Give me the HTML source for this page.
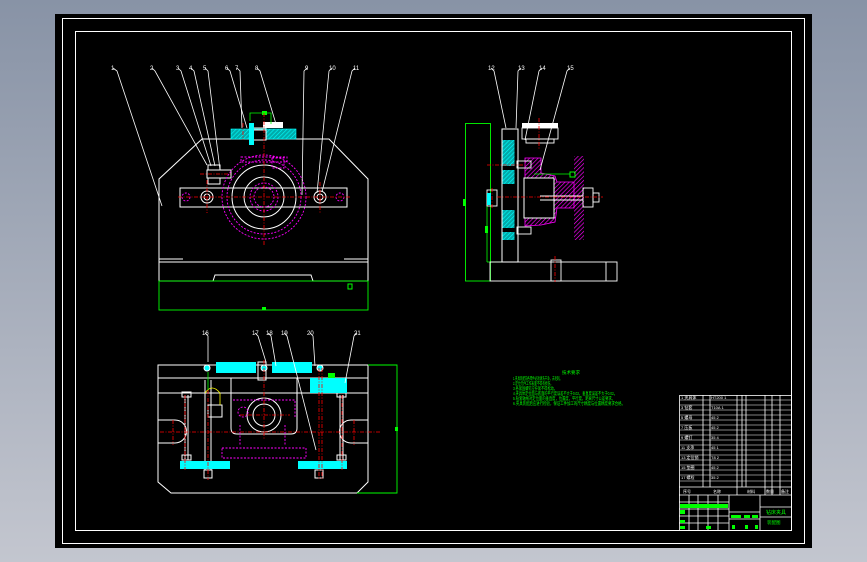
<!DOCTYPE html>
<html><head><meta charset="utf-8"><style>
html,body{margin:0;padding:0;width:867px;height:562px;overflow:hidden;background:linear-gradient(#8893a6,#c3c6cf);}
svg{display:block}
</style></head><body>
<svg width="867" height="562" viewBox="0 0 867 562" xmlns="http://www.w3.org/2000/svg" font-family="Liberation Sans, Noto Sans CJK SC, sans-serif">
<defs>
<pattern id="hc" width="3" height="3" patternUnits="userSpaceOnUse" patternTransform="rotate(45)"><rect width="3" height="3" fill="#0aa"/><line x1="0" y1="0" x2="0" y2="3" stroke="#0ff" stroke-width="1.2"/></pattern>
<pattern id="hm" width="3" height="3" patternUnits="userSpaceOnUse" patternTransform="rotate(45)"><rect width="3" height="3" fill="#000"/><line x1="0" y1="0" x2="0" y2="3" stroke="#f0f" stroke-width="1.3"/></pattern>
</defs>
<rect x="55" y="14" width="757" height="534" fill="#000"/>
<rect x="62.5" y="18.5" width="742" height="525" fill="none" stroke="#fff" stroke-width="1"/>
<rect x="75.5" y="31.5" width="716" height="499" fill="none" stroke="#fff" stroke-width="1"/>

<!-- FRONT VIEW -->
<g fill="none" stroke="#fff" stroke-width="1">
<path d="M202 139 L329 139 L368 179 L368 262 L159 262 L159 179 Z"/>
<path d="M159 262 L368 262 L368 281 L313 281 L311 275 L215 275 L213 281 L159 281 Z"/>
<path d="M159 259 L183 259 M344 259 L368 259"/>
<rect x="180" y="188" width="167" height="19"/>
<rect x="207" y="170" width="24" height="8"/>
<rect x="208" y="165" width="12" height="5"/>
<rect x="208" y="178" width="12" height="6"/>
<circle cx="264" cy="197" r="32"/>
<circle cx="264" cy="197" r="20"/>
<circle cx="207" cy="197" r="6"/><circle cx="207" cy="197" r="3"/>
<circle cx="320" cy="197" r="6"/><circle cx="320" cy="197" r="3"/>
<rect x="250" y="128" width="16" height="12"/>
</g>
<rect x="231" y="129" width="65" height="10" fill="url(#hc)" stroke="#0ff" stroke-width="0.6"/>
<rect x="250" y="130" width="16" height="10" fill="#000" stroke="#fff"/>
<rect x="263" y="122" width="20" height="6" fill="#fff"/>
<rect x="249" y="123" width="5" height="22" fill="#0ff"/>
<path d="M250 121 L250 113 L271 113 L271 124" fill="none" stroke="#0f0" stroke-width="0.8"/>
<rect x="262" y="111" width="5" height="4" fill="#0f0"/>
<g fill="none" stroke="#f0f" stroke-width="0.9" stroke-dasharray="2,1.5">
<circle cx="264" cy="197" r="42"/>
<circle cx="264" cy="197" r="37"/>
<circle cx="264" cy="197" r="14"/>
<circle cx="264" cy="197" r="10"/>
<rect x="241" y="157" width="46" height="5"/>
<rect x="272" y="158" width="12" height="10"/>
<circle cx="186" cy="197" r="4"/><circle cx="340" cy="197" r="4"/>
</g>
<rect x="159" y="281" width="209" height="29" fill="none" stroke="#0f0" stroke-width="0.9"/>
<rect x="262" y="307" width="4" height="3" fill="#0f0"/>
<rect x="348" y="284" width="4" height="5" fill="none" stroke="#0f0"/>
<g stroke="#f00" stroke-width="0.8" stroke-dasharray="4,1.5,1,1.5">
<line x1="264" y1="113" x2="264" y2="245"/>
<line x1="178" y1="197" x2="350" y2="197"/>
<line x1="207" y1="180" x2="207" y2="213"/><line x1="320" y1="182" x2="320" y2="213"/>
<line x1="200" y1="174" x2="232" y2="174"/>
<line x1="243" y1="123" x2="243" y2="140"/>
</g>
<!-- leaders front -->
<g stroke="#fff" stroke-width="0.8" fill="none">
<path d="M113 68 L117 71 L162 206"/><path d="M152 68 L155 71 L207 165"/>
<path d="M178 68 L181 71 L211 166"/><path d="M191 68 L194 71 L215 166"/>
<path d="M205 68 L208 71 L220 170"/><path d="M227 68 L230 71 L247 128"/>
<path d="M237 68 L240 71 L242 128"/><path d="M257 68 L260 71 L276 124"/>
<path d="M307 68 L304 71 L302 195"/><path d="M332 68 L329 71 L317 193"/>
<path d="M355 68 L352 71 L322 192"/>
</g>
<g fill="#fff" font-size="6">
<text x="111" y="70">1</text><text x="150" y="70">2</text><text x="176" y="70">3</text><text x="189" y="70">4</text><text x="203" y="70">5</text><text x="225" y="70">6</text><text x="235" y="70">7</text><text x="255" y="70">8</text><text x="305" y="70">9</text><text x="329" y="70">10</text><text x="353" y="70">11</text>
</g>

<!-- SIDE VIEW -->
<rect x="465.5" y="123.5" width="25" height="157.5" fill="none" stroke="#0f0" stroke-width="0.9"/>
<line x1="487" y1="193" x2="487" y2="262" stroke="#0f0" stroke-width="0.8"/>
<line x1="487" y1="262" x2="502" y2="262" stroke="#0f0" stroke-width="0.8"/>
<rect x="463" y="199" width="3" height="7" fill="#0f0"/>
<rect x="485" y="226" width="3" height="7" fill="#0f0"/>
<rect x="502" y="129" width="16" height="133" fill="none" stroke="#fff"/>
<rect x="502.5" y="140" width="12" height="26" fill="url(#hc)"/>
<rect x="502.5" y="170" width="12" height="14" fill="url(#hc)"/>
<rect x="502.5" y="210" width="12" height="18" fill="url(#hc)"/>
<rect x="502.5" y="232" width="12" height="8" fill="url(#hc)"/>
<rect x="574" y="156" width="10" height="84" fill="url(#hm)"/>
<path d="M525 158 L541 158 L541 173 L555 176 L557 182 L574 182 L574 208 L557 208 L555 222 L541 225 L525 226 Z" fill="url(#hm)" stroke="#f0f" stroke-width="0.8"/>
<rect x="524" y="178" width="30" height="40" fill="#000" stroke="#fff"/>
<rect x="522" y="123" width="36" height="5" fill="#fff"/>
<g fill="none" stroke="#fff" stroke-width="0.9">
<rect x="522" y="128" width="36" height="11"/><rect x="526" y="139" width="28" height="4"/>
<rect x="517" y="161" width="14" height="7"/><rect x="517" y="227" width="14" height="7"/>
<line x1="540" y1="196" x2="583" y2="196"/><line x1="540" y1="200" x2="583" y2="200"/>
<rect x="583" y="188" width="10" height="19"/><rect x="593" y="193" width="6" height="9"/>
<rect x="487" y="190" width="10" height="16"/>
<rect x="490" y="262" width="127" height="19"/><line x1="606" y1="262" x2="606" y2="281"/>
<rect x="551" y="260" width="10" height="21"/>
</g>
<rect x="487" y="193" width="4" height="12" fill="#0ff"/>
<line x1="534" y1="174" x2="570" y2="174" stroke="#0f0" stroke-width="0.8"/>
<rect x="570" y="172" width="5" height="5" fill="none" stroke="#0f0"/>
<g stroke="#f00" stroke-width="0.8" stroke-dasharray="4,1.5,1,1.5">
<line x1="539" y1="118" x2="539" y2="150"/><line x1="487" y1="165" x2="525" y2="165"/>
<line x1="497" y1="197" x2="603" y2="197"/><line x1="555" y1="256" x2="555" y2="282"/>
<line x1="492" y1="188" x2="492" y2="208"/>
</g>
<g stroke="#fff" stroke-width="0.8" fill="none">
<path d="M491 68 L494 71 L506 128"/><path d="M521 68 L518 71 L516 128"/>
<path d="M542 68 L539 71 L525 140"/><path d="M570 68 L567 71 L540 170"/>
</g>
<g fill="#fff" font-size="6"><text x="488" y="70">12</text><text x="518" y="70">13</text><text x="539" y="70">14</text><text x="567" y="70">15</text></g>

<!-- BOTTOM VIEW -->
<g fill="none" stroke="#fff" stroke-width="1">
<path d="M158 365 L368 365 L368 482 L357 493 L171 493 L158 482 Z"/>
<line x1="158" y1="378" x2="368" y2="378"/><line x1="158" y1="393" x2="368" y2="393"/>
<path d="M158 420 L175 420 A11 11 0 0 1 175 443 L158 443"/>
<path d="M368 420 L351 420 A11 11 0 0 0 351 443 L368 443"/>
<path d="M231 378 L231 428 Q231 434 237 434 L291 434 Q297 434 297 428 L297 378"/>
<circle cx="264" cy="415" r="17"/><circle cx="264" cy="415" r="11"/>
<line x1="185" y1="395" x2="185" y2="460"/><line x1="188" y1="395" x2="188" y2="460"/>
<line x1="340" y1="395" x2="340" y2="460"/><line x1="343" y1="395" x2="343" y2="460"/>
<rect x="182" y="392" width="9" height="5"/><rect x="337" y="392" width="9" height="5"/>
<rect x="182" y="455" width="9" height="5"/><rect x="337" y="455" width="9" height="5"/>
<rect x="204" y="470" width="8" height="8"/><rect x="315" y="470" width="8" height="8"/>
<line x1="205" y1="380" x2="205" y2="470"/><line x1="211" y1="380" x2="211" y2="470"/>
<rect x="258" y="362" width="8" height="18"/>
<rect x="208" y="405" width="14" height="12"/>
</g>
<rect x="216" y="362" width="40" height="11" fill="#0ff"/>
<rect x="272" y="362" width="40" height="11" fill="#0ff"/>
<rect x="310" y="378" width="37" height="15" fill="#0ff"/>
<rect x="180" y="461" width="50" height="8" fill="#0ff"/>
<rect x="298" y="461" width="49" height="8" fill="#0ff"/>
<circle cx="207" cy="368" r="3" fill="#0ff" stroke="#fff"/><circle cx="264" cy="368" r="3" fill="#0ff" stroke="#fff"/><circle cx="320" cy="368" r="3" fill="#0ff" stroke="#fff"/>
<g fill="none" stroke="#f0f" stroke-width="0.9" stroke-dasharray="2,1.5">
<rect x="222" y="448" width="84" height="10"/>
<path d="M233 400 L295 400 L295 418 M240 425 L240 445 M285 425 L285 445"/>
<circle cx="243" cy="412" r="5"/>
</g>
<path d="M205 393 Q212 383 220 393 L220 405" fill="none" stroke="#ff0" stroke-width="0.8"/>
<line x1="208" y1="372" x2="208" y2="392" stroke="#0f0" stroke-width="0.8"/>
<rect x="328" y="373" width="7" height="5" fill="#0f0"/>
<path d="M368 365 L397 365 L397 493 L357 493" fill="none" stroke="#0f0" stroke-width="0.9"/>
<rect x="395" y="427" width="3" height="4" fill="#0f0"/>
<g stroke="#f00" stroke-width="0.8" stroke-dasharray="4,1.5,1,1.5">
<line x1="160" y1="432" x2="380" y2="432"/><line x1="208" y1="390" x2="208" y2="480"/>
<line x1="319" y1="368" x2="319" y2="480"/><line x1="322" y1="368" x2="322" y2="480"/>
<line x1="185" y1="395" x2="185" y2="470"/><line x1="342" y1="395" x2="342" y2="470"/>
<line x1="173" y1="420" x2="173" y2="445"/><line x1="354" y1="420" x2="354" y2="445"/>
<line x1="264" y1="360" x2="264" y2="440"/><line x1="240" y1="415" x2="290" y2="415"/>
</g>
<g stroke="#fff" stroke-width="0.8" fill="none">
<path d="M205 333 L208 336 L208 362"/><path d="M255 333 L258 336 L266 362"/>
<path d="M268 333 L271 336 L276 366"/><path d="M284 333 L287 336 L316 450"/>
<path d="M310 333 L313 336 L315 366"/><path d="M357 333 L354 336 L345 383"/>
</g>
<g fill="#fff" font-size="6"><text x="202" y="335">16</text><text x="252" y="335">17</text><text x="266" y="335">18</text><text x="281" y="335">19</text><text x="307" y="335">20</text><text x="354" y="335">21</text></g>

<!-- notes -->
<g fill="#0f0" font-size="4.5">
<text x="562" y="374">技术要求</text>
<text x="513" y="380" textLength="49" lengthAdjust="spacingAndGlyphs">1.夹具装配前各零件必须清洗干净，去毛刺。</text>
<text x="513" y="385" textLength="40" lengthAdjust="spacingAndGlyphs">2.定位元件工作表面不得有损伤。</text>
<text x="513" y="390" textLength="44" lengthAdjust="spacingAndGlyphs">3.各紧固螺钉应拧紧不得松动。</text>
<text x="513" y="395" textLength="104" lengthAdjust="spacingAndGlyphs">4.夹具体定位面与底面的平行度误差不大于0.02，垂直度误差不大于0.02。</text>
<text x="513" y="400" textLength="102" lengthAdjust="spacingAndGlyphs">5.钻套轴线对定位面的垂直度，位置度，平行度，距离尺寸公差要求。</text>
<text x="513" y="405" textLength="112" lengthAdjust="spacingAndGlyphs">6.夹具装配后应进行检验，保证工件加工的尺寸精度与位置精度要求合格。</text>
</g>

<!-- TITLE BLOCK -->
<g stroke="#fff" stroke-width="0.8" fill="none">
<rect x="679.5" y="395.5" width="112" height="135"/>
<line x1="703" y1="395" x2="703" y2="487"/><line x1="710" y1="395" x2="710" y2="487"/>
<line x1="737" y1="395" x2="737" y2="495"/><line x1="742" y1="395" x2="742" y2="487"/>
<line x1="746" y1="395" x2="746" y2="487"/><line x1="765" y1="395" x2="765" y2="495"/>
<line x1="772" y1="395" x2="772" y2="495"/><line x1="780" y1="395" x2="780" y2="495"/>
<line x1="679" y1="487" x2="792" y2="487"/><line x1="679" y1="495" x2="792" y2="495"/>
<line x1="729" y1="495" x2="729" y2="530"/><line x1="760" y1="495" x2="760" y2="530"/>
<line x1="760" y1="507" x2="792" y2="507"/><line x1="760" y1="517" x2="792" y2="517"/>
<line x1="679" y1="502" x2="729" y2="502"/><line x1="679" y1="509" x2="729" y2="509"/><line x1="679" y1="516" x2="729" y2="516"/><line x1="679" y1="523" x2="729" y2="523"/>
<line x1="729" y1="512" x2="760" y2="512"/><line x1="729" y1="519" x2="760" y2="519"/>
<line x1="689" y1="495" x2="689" y2="530"/><line x1="698" y1="495" x2="698" y2="530"/><line x1="708" y1="495" x2="708" y2="530"/><line x1="718" y1="495" x2="718" y2="530"/>
</g>
<g stroke="#fff" stroke-width="0.6">
<line x1="680" y1="400" x2="792" y2="400"/><line x1="680" y1="405" x2="792" y2="405"/><line x1="680" y1="410" x2="792" y2="410"/><line x1="680" y1="415" x2="792" y2="415"/><line x1="680" y1="420" x2="792" y2="420"/><line x1="680" y1="425" x2="792" y2="425"/><line x1="680" y1="430" x2="792" y2="430"/><line x1="680" y1="435" x2="792" y2="435"/><line x1="680" y1="440" x2="792" y2="440"/><line x1="680" y1="445" x2="792" y2="445"/><line x1="680" y1="450" x2="792" y2="450"/><line x1="680" y1="455" x2="792" y2="455"/><line x1="680" y1="460" x2="792" y2="460"/><line x1="680" y1="465" x2="792" y2="465"/><line x1="680" y1="470" x2="792" y2="470"/><line x1="680" y1="475" x2="792" y2="475"/><line x1="680" y1="481" x2="792" y2="481"/>
</g>
<g fill="#fff" font-size="4">
<text x="681" y="399">1 夹具体</text><text x="711" y="399">HT200 1</text>
<text x="681" y="409">3 钻套</text><text x="711" y="409">T10A 1</text>
<text x="681" y="419">5 螺母</text><text x="711" y="419">45 2</text>
<text x="681" y="429">7 压板</text><text x="711" y="429">45 2</text>
<text x="681" y="439">9 螺钉</text><text x="711" y="439">35 4</text>
<text x="681" y="449">11 支承</text><text x="711" y="449">45 1</text>
<text x="681" y="459">13 定位销</text><text x="711" y="459">T8 2</text>
<text x="681" y="469">15 垫圈</text><text x="711" y="469">45 2</text>
<text x="681" y="479">17 螺栓</text><text x="711" y="479">35 2</text>
<text x="683" y="493">序号</text><text x="713" y="493">名称</text><text x="747" y="493">材料</text><text x="766" y="493">数量</text><text x="781" y="493">备注</text>
</g>
<rect x="680" y="504" width="48" height="4" fill="#0f0"/>
<rect x="680" y="510" width="5" height="4" fill="#0f0"/>
<rect x="731" y="515" width="10" height="3" fill="#0f0"/><rect x="744" y="515" width="6" height="3" fill="#0f0"/><rect x="752" y="515" width="6" height="3" fill="#0f0"/>
<rect x="680" y="520" width="5" height="3" fill="#0f0"/><rect x="680" y="526" width="5" height="3" fill="#0f0"/><rect x="706" y="526" width="5" height="3" fill="#0f0"/>
<rect x="732" y="525" width="3" height="4" fill="#0f0"/><rect x="745" y="525" width="3" height="4" fill="#0f0"/><rect x="755" y="525" width="3" height="4" fill="#0f0"/>
<text x="766" y="514" fill="#0f0" font-size="5">钻床夹具</text>
<text x="767" y="524" fill="#0f0" font-size="4.5">装配图</text>
</svg>
</body></html>
